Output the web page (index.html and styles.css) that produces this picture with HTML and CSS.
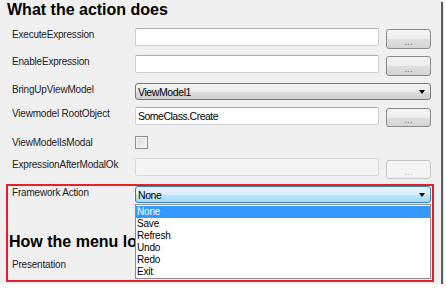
FILE: index.html
```html
<!doctype html>
<html lang="en">
  <head>
    <meta charset="UTF-8" />
    <title>Action editor</title>
    <link rel="stylesheet" href="styles.css">
  </head>
  <body>
    <div class="frame">
      <h1 class="section-title">What the action does</h1>

      <div class="row row-first">
        <span class="field-label">ExecuteExpression</span>
        <input class="textbox" type="text" value="" />
        <button class="ellipsis">...</button>
      </div>
      <div class="row">
        <span class="field-label">EnableExpression</span>
        <input class="textbox" type="text" value="" />
        <button class="ellipsis">...</button>
      </div>
      <div class="row row-combo">
        <span class="field-label">BringUpViewModel</span>
        <div class="combo">
          <span class="combo-text">ViewModel1</span>
          <span class="combo-arrow"></span>
        </div>
      </div>
      <div class="row row-root">
        <span class="field-label">Viewmodel RootObject</span>
        <input class="textbox" type="text" value="SomeClass.Create" />
        <button class="ellipsis">...</button>
      </div>
      <div class="row row-check">
        <span class="field-label">ViewModelIsModal</span>
        <span class="checkbox"></span>
      </div>
      <div class="row row-last">
        <span class="field-label">ExpressionAfterModalOk</span>
        <input class="textbox" type="text" value="" disabled />
        <button class="ellipsis ellipsis-low" disabled>...</button>
      </div>

      <div class="highlight-box">
        <div class="row row-framework">
          <span class="field-label">Framework Action</span>
          <div class="combo combo-open">
            <span class="combo-text">None</span>
            <span class="combo-arrow"></span>
            <ul class="dropdown">
              <li class="selected">None</li>
              <li>Save</li>
              <li>Refresh</li>
              <li>Undo</li>
              <li>Redo</li>
              <li>Exit</li>
            </ul>
          </div>
        </div>
        <h2 class="section-title section-title-inner">How the menu looks</h2>
        <div class="row row-presentation">
          <span class="field-label">Presentation</span>
        </div>
      </div>
    </div>
  </body>
</html>
```

FILE: styles.css
```css
* {
  box-sizing: border-box;
}

body {
  margin: 0;
  background: #ffffff;
  font-family: "Liberation Sans", Arial, sans-serif;
  color: #1e1e1e;
}

.frame {
  width: 441px;
  height: 284px;
  background: #f0f0f0;
  box-shadow: 2px 2px 1px #5e5e5e;
  overflow: hidden;
}

.section-title {
  margin: 0 0 8px 7px;
  height: 20px;
  font-size: 16px;
  line-height: 20px;
  font-weight: bold;
  color: #000;
}

.row {
  display: flex;
  align-items: flex-start;
  height: 28px;
}

.row-first {
  height: 27px;
}

.row-combo {
  height: 24px;
}

.row-root {
  height: 29px;
}

.row-check {
  height: 22px;
}

.row-last {
  height: 26px;
}

.field-label {
  width: 135px;
  padding-left: 12px;
  font-size: 10px;
  line-height: 13px;
  letter-spacing: -0.2px;
  color: #222;
  white-space: nowrap;
}

.textbox {
  width: 244px;
  height: 18px;
  margin: 0;
  padding: 0 2px;
  border: 1px solid #cdd1d6;
  border-top-color: #abadb3;
  border-radius: 2px;
  background: #fff;
  font-family: inherit;
  font-size: 10.5px;
  letter-spacing: -0.5px;
  color: #000;
  outline: none;
}

.textbox:disabled {
  background: #f4f4f4;
  border-color: #d9d9d9;
}

.ellipsis {
  width: 45px;
  height: 19px;
  margin: 1px 0 0 7px;
  padding: 5px 0 0;
  border: 1px solid #8a8a8a;
  border-radius: 3px;
  background: linear-gradient(#f6f6f6 0%, #ececec 50%, #dfdfdf 51%, #d4d4d4 100%);
  font-family: inherit;
  font-size: 10px;
  line-height: 10px;
  color: #7d6a6a;
}

.row-first .ellipsis,
.row-first + .row .ellipsis {
  height: 20px;
}

.ellipsis-low {
  margin-top: 2px;
}

.ellipsis:disabled {
  border-color: #c4c7c9;
  background: #f4f4f4;
  color: #c0c0c0;
}

.combo {
  position: relative;
  display: flex;
  align-items: center;
  width: 296px;
  height: 17px;
  padding: 0 5px 0 2px;
  border: 1px solid #7a7a7a;
  border-radius: 3px;
  background: linear-gradient(#f3f3f3 0%, #ebebeb 50%, #dddddd 51%, #d0d0d0 100%);
}

.combo-text {
  flex: 1;
  font-size: 10.5px;
  letter-spacing: -0.4px;
  color: #000;
}

.combo-arrow {
  width: 0;
  height: 0;
  border-left: 3px solid transparent;
  border-right: 3px solid transparent;
  border-top: 4px solid #000;
}

.combo-open {
  border-color: #3c7fb1;
  background: linear-gradient(#e8f5fc 0%, #d9f0fc 50%, #bee6fd 51%, #a7d9f5 100%);
}

.checkbox {
  width: 13px;
  height: 13px;
  border: 1px solid #8e8f8f;
  background: linear-gradient(135deg, #dcdcdc, #f6f6f6);
  box-shadow: inset 0 0 0 1px #f4f4f4;
}

.highlight-box {
  width: 428px;
  height: 98px;
  margin-left: 6px;
  border: 2px solid #e3222b;
}

.highlight-box .field-label {
  width: 127px;
  padding-left: 4px;
}

.row-framework {
  height: 46px;
}

/* the open list covers the rest of this heading */
.section-title-inner {
  width: 126px;
  margin: 0 0 6px 1px;
  white-space: nowrap;
  overflow: hidden;
}

.dropdown {
  position: absolute;
  top: 17px;
  left: -1px;
  width: 296px;
  height: 75px;
  margin: 0;
  padding: 1px 0 0;
  list-style: none;
  background: #fff;
  border: 1px solid #8c8c8c;
  z-index: 2;
}

.dropdown li {
  height: 12px;
  padding-left: 1px;
  font-size: 10px;
  line-height: 12px;
  letter-spacing: -0.2px;
  color: #000;
}

.dropdown .selected {
  background: #3399ff;
  color: #fff;
}
```
